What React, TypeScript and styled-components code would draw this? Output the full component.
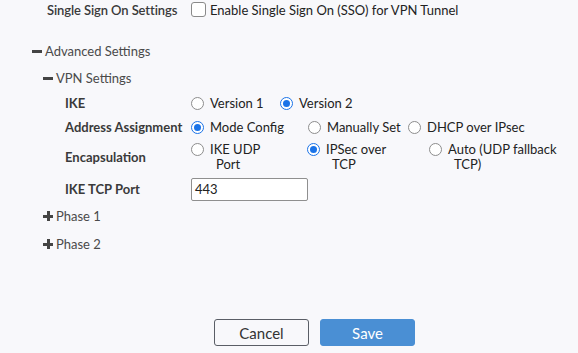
import React from "react";
import styled, { createGlobalStyle } from "styled-components";

const Global = createGlobalStyle`
  html, body { margin: 0; padding: 0; background: #f8f8fb; }
  body { font-family: Lato, "Open Sans", sans-serif; font-size: 13px; color: #333; }
  * { box-sizing: border-box; }
`;

const Page = styled.div`
  width: 578px;
  height: 353px;
  background: #f8f8fb;
  overflow: hidden;
  display: flex;
  flex-direction: column;
`;

const SsoRow = styled.div`
  display: flex;
  align-items: center;
  height: 19px;
  padding-left: 47px;
`;

const SsoLabel = styled.div`
  width: 144px;
  font-size: 13px;
  font-weight: 600;
  color: #3a3a3a;
  letter-spacing: -0.1px;
`;

const Check = styled.span`
  width: 15px;
  height: 15px;
  border: 1px solid #8a8a8a;
  border-radius: 3px;
  background: #fff;
  margin-right: 4px;
  flex: none;
`;

const FieldText = styled.span`
  color: #222;
  font-size: 13px;
`;

const Toggle = styled.div<{ $indent: number; $top: number }>`
  display: flex;
  align-items: center;
  height: 20px;
  margin-top: ${(p) => p.$top}px;
  padding-left: ${(p) => p.$indent}px;
  color: #4a4a4a;
  font-size: 13px;
`;

const Sign = styled.span`
  position: relative;
  width: 10px;
  height: 10px;
  margin-right: 3px;
  flex: none;
  &::before {
    content: "";
    position: absolute;
    left: 0;
    top: 4px;
    width: 10px;
    height: 3px;
    background: #444;
  }
`;

const PlusSign = styled(Sign)`
  &::after {
    content: "";
    position: absolute;
    left: 4px;
    top: 0;
    width: 3px;
    height: 10px;
    background: #444;
  }
`;

const Grid = styled.div`
  display: grid;
  grid-template-columns: 126px 1fr;
  padding-left: 65px;
  margin-top: 3px;
`;

const Label = styled.div<{ $h: number }>`
  height: ${(p) => p.$h}px;
  display: flex;
  align-items: center;
  font-weight: 700;
  color: #3a3a3a;
  font-size: 13px;
`;

const Options = styled.div<{ $h: number }>`
  height: ${(p) => p.$h}px;
  display: flex;
  align-items: center;
`;

const Option = styled.label<{ $w?: number }>`
  display: flex;
  align-items: flex-start;
  ${(p) => (p.$w ? `width: ${p.$w}px;` : "")}
  flex: none;
  color: #222;
  font-size: 13px;
  line-height: 15px;
`;

const Radio = styled.span<{ $on?: boolean }>`
  width: 13px;
  height: 13px;
  border-radius: 50%;
  flex: none;
  margin-top: 1px;
  margin-right: 6px;
  background: #fff;
  border: 1px solid ${(p) => (p.$on ? "#1a73e8" : "#8d8d8d")};
  position: relative;
  ${(p) =>
    p.$on
      ? `&::after{content:"";position:absolute;left:2px;top:2px;width:7px;height:7px;border-radius:50%;background:#1a73e8;}`
      : ""}
`;

const WrapText = styled.span<{ $max: number }>`
  max-width: ${(p) => p.$max}px;
  padding-left: 6px;
  text-indent: -6px;
`;

const Input = styled.div`
  width: 117px;
  height: 23px;
  border: 1px solid #8f8f8f;
  border-radius: 2px;
  background: #fff;
  padding-left: 3px;
  display: flex;
  align-items: center;
  color: #222;
  font-size: 13px;
`;

const Buttons = styled.div`
  display: flex;
  gap: 11px;
  padding-left: 214px;
  margin-top: 65px;
`;

const Btn = styled.button<{ $primary?: boolean }>`
  width: 95px;
  height: 27px;
  border-radius: 3px;
  font-family: Lato, sans-serif;
  font-size: 15px;
  border: 1px solid ${(p) => (p.$primary ? "#4a8fd4" : "#5a5e66")};
  background: ${(p) => (p.$primary ? "#4a8fd4" : "#f8f8fb")};
  color: ${(p) => (p.$primary ? "#fff" : "#333")};
  padding: 0;
`;

export default function App() {
  return (
    <Page>
      <Global />
      <SsoRow>
        <SsoLabel>Single Sign On Settings</SsoLabel>
        <Check />
        <FieldText>Enable Single Sign On (SSO) for VPN Tunnel</FieldText>
      </SsoRow>
      <Toggle $indent={32} $top={22}>
        <Sign />
        Advanced Settings
      </Toggle>
      <Toggle $indent={43} $top={7}>
        <Sign />
        VPN Settings
      </Toggle>
      <Grid>
        <Label $h={24}>IKE</Label>
        <Options $h={24}>
          <Option $w={89}>
            <Radio />
            Version 1
          </Option>
          <Option>
            <Radio $on />
            Version 2
          </Option>
        </Options>
        <Label $h={24}>Address Assignment</Label>
        <Options $h={24}>
          <Option $w={117}>
            <Radio $on />
            Mode Config
          </Option>
          <Option $w={100}>
            <Radio />
            Manually Set
          </Option>
          <Option>
            <Radio />
            DHCP over IPsec
          </Option>
        </Options>
        <Label $h={36}>Encapsulation</Label>
        <Options $h={36}>
          <Option $w={116}>
            <Radio />
            <WrapText $max={70}>IKE UDP Port</WrapText>
          </Option>
          <Option $w={122}>
            <Radio $on />
            <WrapText $max={80}>IPSec over TCP</WrapText>
          </Option>
          <Option>
            <Radio />
            <WrapText $max={120}>Auto (UDP fallback TCP)</WrapText>
          </Option>
        </Options>
        <Label $h={28}>IKE TCP Port</Label>
        <Options $h={28}>
          <Input>443</Input>
        </Options>
      </Grid>
      <Toggle $indent={43} $top={3}>
        <PlusSign />
        Phase 1
      </Toggle>
      <Toggle $indent={43} $top={8}>
        <PlusSign />
        Phase 2
      </Toggle>
      <Buttons>
        <Btn>Cancel</Btn>
        <Btn $primary>Save</Btn>
      </Buttons>
    </Page>
  );
}
